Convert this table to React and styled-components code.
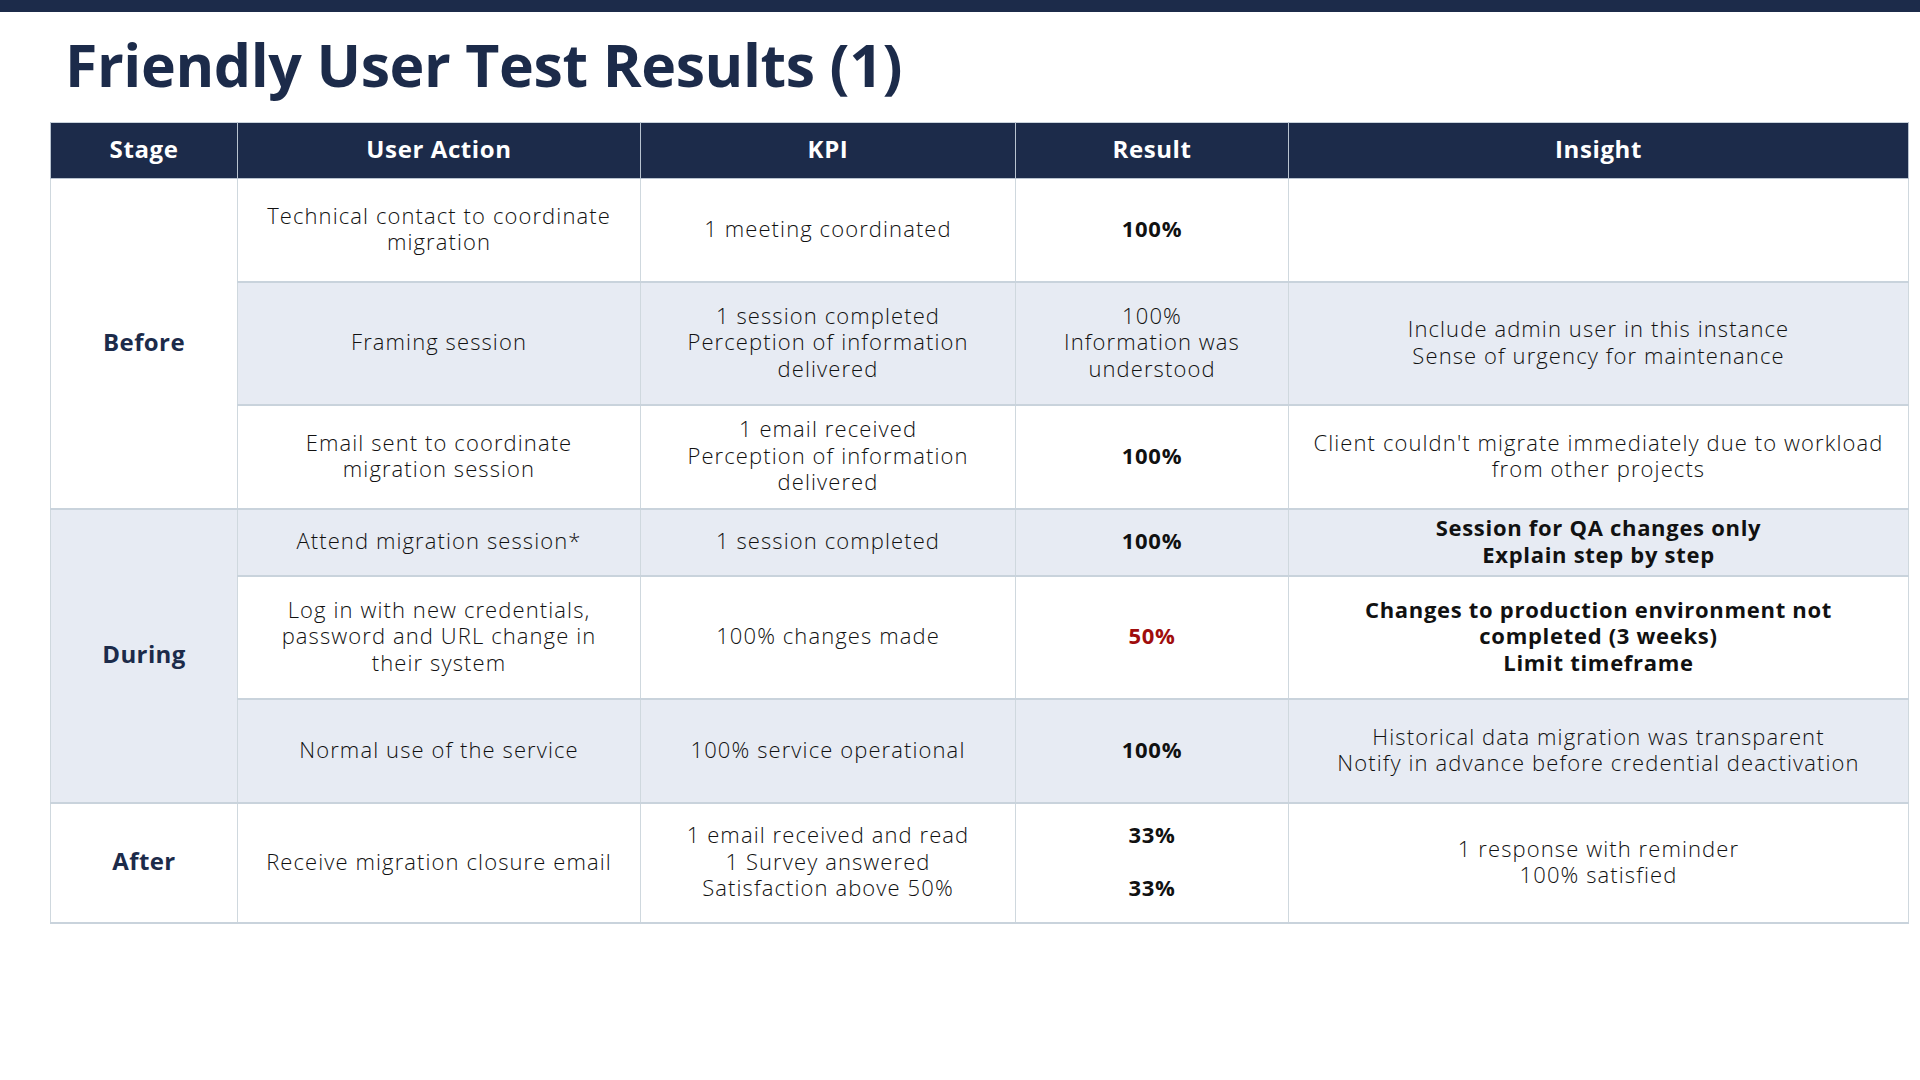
import styled, { createGlobalStyle } from 'styled-components';

const GlobalStyle = createGlobalStyle`
  html, body {
    margin: 0;
    padding: 0;
    background: #ffffff;
  }
  body {
    font-family: "Open Sans", "Liberation Sans", sans-serif;
    color: #222;
  }
`;

const rows = [
  {
    stage: 'Before',
    span: 3,
    height: 103,
    shade: false,
    action: ['Technical contact to coordinate', 'migration'],
    kpi: ['1 meeting coordinated'],
    result: ['100%'],
    resultBold: true,
    insight: [],
  },
  {
    height: 123,
    shade: true,
    action: ['Framing session'],
    kpi: ['1 session completed', 'Perception of information', 'delivered'],
    result: ['100%', 'Information was', 'understood'],
    insight: ['Include admin user in this instance', 'Sense of urgency for maintenance'],
  },
  {
    height: 104,
    shade: false,
    action: ['Email sent to coordinate', 'migration session'],
    kpi: ['1 email received', 'Perception of information', 'delivered'],
    result: ['100%'],
    resultBold: true,
    insight: ["Client couldn't migrate immediately due to workload", 'from other projects'],
  },
  {
    stage: 'During',
    span: 3,
    height: 67,
    shade: true,
    action: ['Attend migration session*'],
    kpi: ['1 session completed'],
    result: ['100%'],
    resultBold: true,
    insight: ['Session for QA changes only', 'Explain step by step'],
    insightBold: true,
  },
  {
    height: 123,
    shade: false,
    action: ['Log in with new credentials,', 'password and URL change in', 'their system'],
    kpi: ['100% changes made'],
    result: ['50%'],
    resultBold: true,
    alert: true,
    insight: ['Changes to production environment not', 'completed (3 weeks)', 'Limit timeframe'],
    insightBold: true,
  },
  {
    height: 104,
    shade: true,
    action: ['Normal use of the service'],
    kpi: ['100% service operational'],
    result: ['100%'],
    resultBold: true,
    insight: ['Historical data migration was transparent', 'Notify in advance before credential deactivation'],
  },
  {
    stage: 'After',
    span: 1,
    height: 120,
    shade: false,
    action: ['Receive migration closure email'],
    kpi: ['1 email received and read', '1 Survey answered', 'Satisfaction above 50%'],
    result: ['33%', '\u00a0', '33%'],
    resultBold: true,
    insight: ['1 response with reminder', '100% satisfied'],
  },
];

const Lines = ({ items }) =>
  items.map((t, i) => (
    <Line key={i}>{t}</Line>
  ));

const App = () => (
  <>
    <GlobalStyle />
    <TopBar />
    <Page>
      <Title>Friendly User Test Results (1)</Title>
      <Table>
        <colgroup>
          <col style={{ width: 187 }} />
          <col style={{ width: 403 }} />
          <col style={{ width: 375 }} />
          <col style={{ width: 273 }} />
          <col style={{ width: 620 }} />
        </colgroup>
        <thead>
          <tr>
            <HeadCell>Stage</HeadCell>
            <HeadCell>User Action</HeadCell>
            <HeadCell>KPI</HeadCell>
            <HeadCell>Result</HeadCell>
            <HeadCell>Insight</HeadCell>
          </tr>
        </thead>
        <tbody>
          {rows.map((r, i) => (
            <Row key={i} $h={r.height}>
              {r.stage && (
                <StageCell rowSpan={r.span} $shade={r.shade}>
                  {r.stage}
                </StageCell>
              )}
              <Cell $shade={r.shade}>
                <Lines items={r.action} />
              </Cell>
              <Cell $shade={r.shade}>
                <Lines items={r.kpi} />
              </Cell>
              <Cell $shade={r.shade} $bold={r.resultBold} $alert={r.alert}>
                <Lines items={r.result} />
              </Cell>
              <Cell $shade={r.shade} $bold={r.insightBold}>
                <Lines items={r.insight} />
              </Cell>
            </Row>
          ))}
        </tbody>
      </Table>
    </Page>
  </>
);

const TopBar = styled.div`
  height: 12px;
  background: #1c2b4a;
`;

const Page = styled.div`
  padding: 0 12px 0 50px;
`;

const Title = styled.h1`
  margin: 0;
  padding: 18px 0 0 15px;
  height: 110px;
  box-sizing: border-box;
  font-family: "Open Sans", "Liberation Sans", sans-serif;
  font-weight: 700;
  font-size: 59px;
  line-height: 68px;
  letter-spacing: -0.4px;
  color: #1c2b4a;
`;

const Table = styled.table`
  width: 1858px;
  table-layout: fixed;
  border-collapse: collapse;
  border: 1px solid #c9d3dc;
`;

const HeadCell = styled.th`
  height: 51px;
  padding: 0 0 4px;
  background: #1c2b4a;
  color: #ffffff;
  font-size: 24px;
  font-weight: 700;
  letter-spacing: 0.6px;
  text-align: center;
  vertical-align: middle;
  border: 1px solid #b8c3cf;
  border-top: none;
`;

const Row = styled.tr`
  height: ${p => p.$h}px;
`;

const Cell = styled.td`
  padding: 0 2px 3px;
  text-align: center;
  vertical-align: middle;
  background: ${p => (p.$shade ? '#e7ebf3' : '#ffffff')};
  border-left: 1px solid #cfd8de;
  border-right: 1px solid #cfd8de;
  border-bottom: 2px solid #c9d3dc;
  font-size: 22px;
  line-height: 26.5px;
  letter-spacing: ${p => (p.$bold ? '0.7px' : '1.1px')};
  font-weight: ${p => (p.$bold ? 700 : 300)};
  color: ${p => (p.$alert ? '#a00d0d' : '#111111')};
`;

const StageCell = styled(Cell)`
  font-size: 24px;
  font-weight: 700;
  letter-spacing: 0.4px;
  color: #1c2b4a;
`;

const Line = styled.div``;

export default App;
